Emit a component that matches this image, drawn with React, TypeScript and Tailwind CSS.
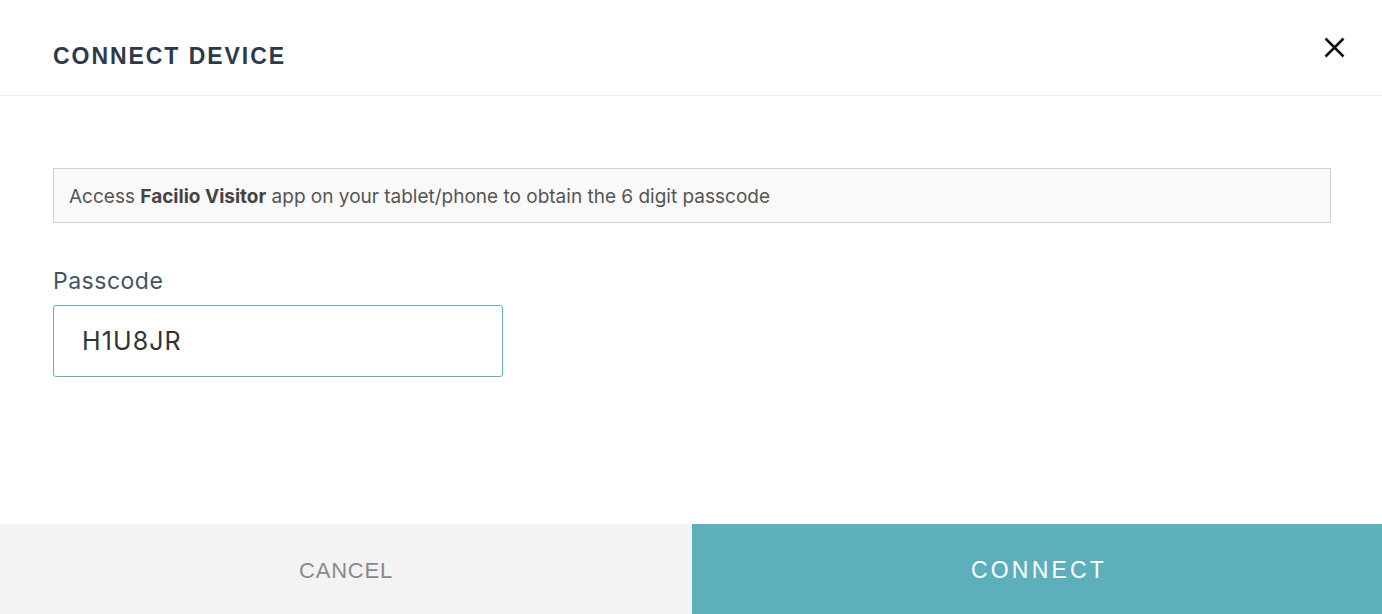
import React from "react";

export default function App() {
  return (
    <div className="w-[1382px] h-[614px] bg-white flex flex-col overflow-hidden">
      <div className="h-[96px] shrink-0 border-b border-[#eceff1] flex items-start justify-between pl-[53px] pr-[37px]">
        <h1 className="mt-[41px] text-[23px] leading-[30px] font-bold tracking-[1.95px] text-[#2d3a4a] [font-family:'Liberation_Sans',Arial,sans-serif]">
          CONNECT DEVICE
        </h1>
        <button className="mt-[36px] w-[22px] h-[22px] flex items-center justify-center">
          <svg width="21" height="21" viewBox="0 0 21 21">
            <path d="M1.5 1.5 L19.5 19.5 M19.5 1.5 L1.5 19.5" stroke="#111" strokeWidth="2.5" fill="none" />
          </svg>
        </button>
      </div>
      <div className="flex-1 pl-[53px] pr-[51px] pt-[72px] [font-family:Inter,'Noto_Sans',sans-serif]">
        <div className="h-[55px] border border-[#d4d4d4] bg-[#f9f9f9] flex items-center px-[15px] pt-[3px] text-[19px] text-[#555]">
          <span>
            Access <b className="font-bold text-[#444]">Facilio Visitor</b> app on your tablet/phone to obtain the 6 digit passcode
          </span>
        </div>
        <div className="mt-[45px] text-[23px] leading-[26px] tracking-[0.5px] text-[#3f5568]">Passcode</div>
        <div className="mt-[11px] w-[450px] h-[72px] border border-[#63b0bd] rounded-[3px] flex items-center px-[28px] pt-[2px] text-[25px] text-[#333] tracking-[1.1px]">
          H1U8JR
        </div>
      </div>
      <div className="h-[90px] shrink-0 flex [font-family:'Liberation_Sans',Arial,sans-serif]">
        <button className="w-[692px] h-full pt-[3px] bg-[#f3f3f3] text-[#8a8a8a] text-[22px] tracking-[0.8px] flex items-center justify-center">
          CANCEL
        </button>
        <button className="flex-1 h-full pt-[3px] pl-[4px] bg-[#5eafbc] text-white text-[23px] tracking-[3.2px] flex items-center justify-center">
          CONNECT
        </button>
      </div>
    </div>
  );
}
